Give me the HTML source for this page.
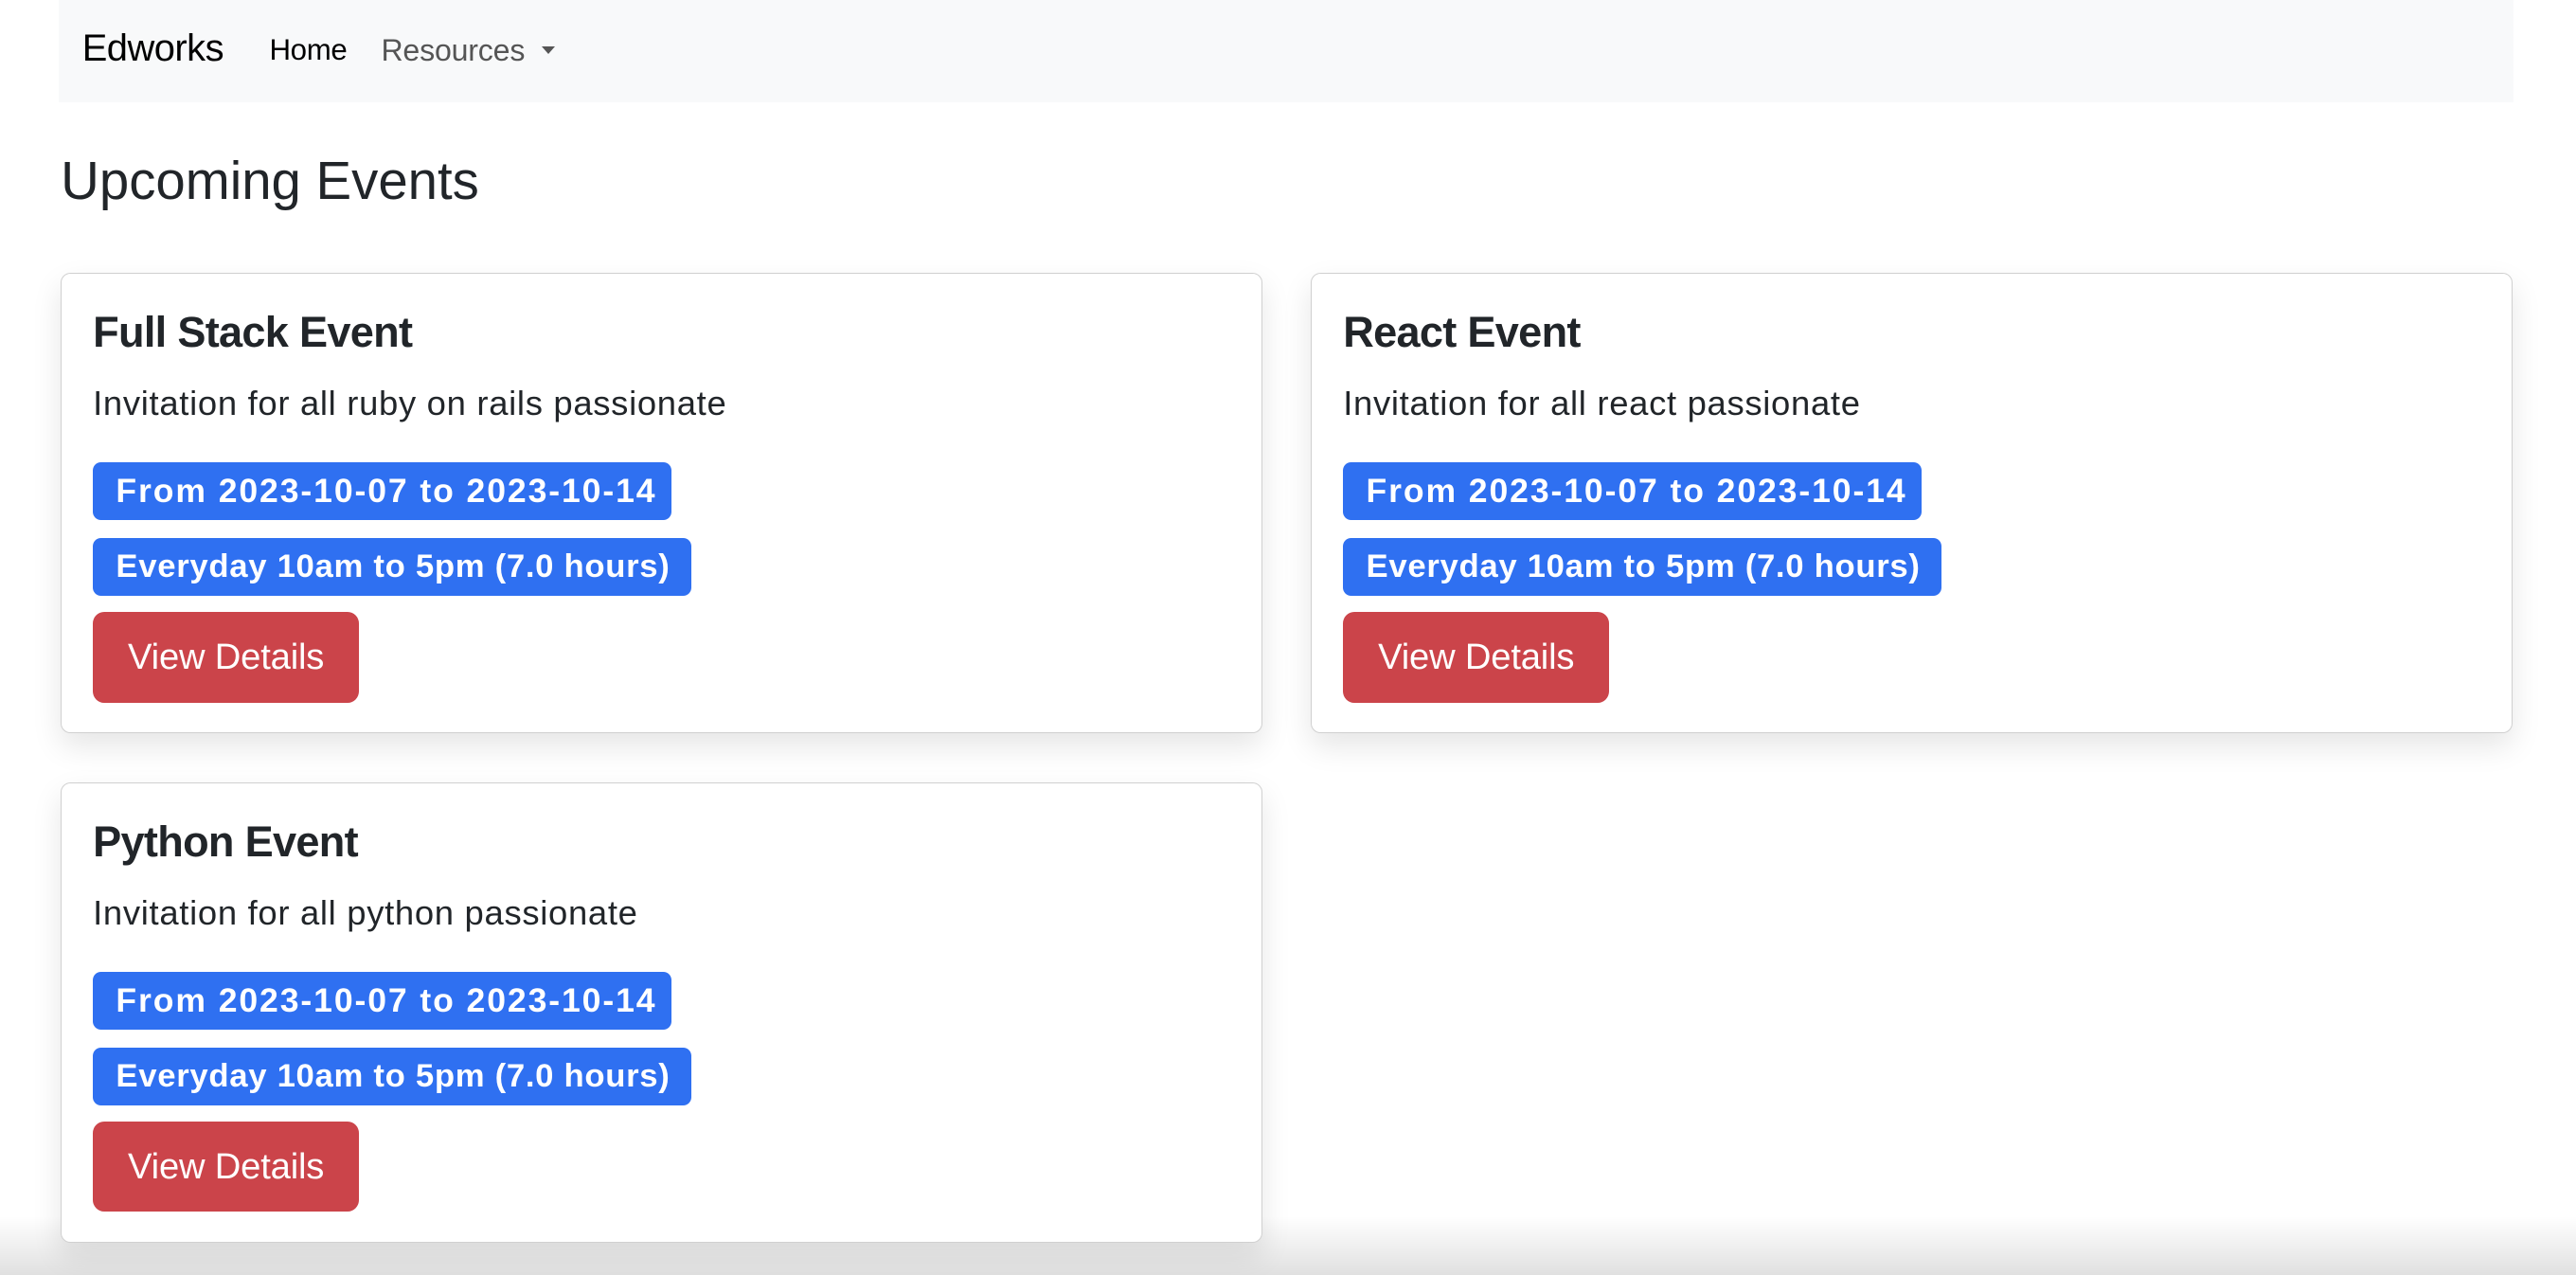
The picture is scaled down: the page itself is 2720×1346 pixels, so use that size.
<!DOCTYPE html>
<html><head><meta charset="utf-8"><style>
html,body{margin:0;padding:0;background:#fff;width:2720px;height:1346px;overflow:hidden}
#z{zoom:1.7347;width:1568px;height:776px;position:relative;font-family:"Liberation Sans",sans-serif;color:#212529}
.nav{position:absolute;left:36px;top:0;width:1494px;height:62px;background:#f8f9fa}
.a{position:absolute;white-space:nowrap}
.card{position:absolute;width:730px;height:279px;border:1px solid #d0d0d0;border-radius:6px;background:#fff;box-shadow:0 8px 18px rgba(0,0,0,.10)}
.t{position:absolute;left:19px;top:21px;font-size:26px;font-weight:bold;letter-spacing:-0.4px;white-space:nowrap}
.d{position:absolute;left:19px;top:67px;font-size:21px;letter-spacing:0.4px;white-space:nowrap}
.b{position:absolute;left:19px;height:35px;line-height:35px;background:#2f70f1;color:#fff;border-radius:5px;font-size:20px;font-weight:bold;padding:0 14px;letter-spacing:0.4px;white-space:nowrap;box-sizing:border-box;overflow:hidden}
.b1{letter-spacing:1.1px;font-size:20.5px}
.btn{position:absolute;left:19px;top:206px;width:162px;height:55px;line-height:55px;background:#cb444a;color:#fff;border-radius:7px;font-size:22px;text-align:center;letter-spacing:-0.1px}
.bot{position:absolute;left:0;top:740px;width:1568px;height:36px;background:linear-gradient(rgba(0,0,0,0),rgba(0,0,0,.12))}
</style></head><body><div id="z">
<div class="nav"></div>
<div class="a" style="left:50px;top:17px;font-size:23px;color:#000;letter-spacing:-0.3px">Edworks</div>
<div class="a" style="left:164px;top:20px;font-size:18px;color:#000;letter-spacing:-0.2px">Home</div>
<div class="a" style="left:232px;top:20px;font-size:18.5px;color:#555;letter-spacing:-0.1px">Resources</div>
<div class="a" style="left:330px;top:28px;width:0;height:0;border-left:4.5px solid transparent;border-right:4.5px solid transparent;border-top:5px solid #555"></div>
<div class="a" style="left:37px;top:91px;font-size:32.5px;letter-spacing:0px">Upcoming Events</div>
<div class="bot"></div>

<div class="card" style="left:37px;top:166px">
<div class="t">Full Stack Event</div>
<div class="d">Invitation for all ruby on rails passionate</div>
<div class="b b1" style="top:115px;width:352px">From 2023-10-07 to 2023-10-14</div>
<div class="b" style="top:161px;width:364px">Everyday 10am to 5pm (7.0 hours)</div>
<div class="btn">View Details</div>
</div>

<div class="card" style="left:798px;top:166px">
<div class="t">React Event</div>
<div class="d">Invitation for all react passionate</div>
<div class="b b1" style="top:115px;width:352px">From 2023-10-07 to 2023-10-14</div>
<div class="b" style="top:161px;width:364px">Everyday 10am to 5pm (7.0 hours)</div>
<div class="btn">View Details</div>
</div>

<div class="card" style="left:37px;top:476px">
<div class="t">Python Event</div>
<div class="d">Invitation for all python passionate</div>
<div class="b b1" style="top:115px;width:352px">From 2023-10-07 to 2023-10-14</div>
<div class="b" style="top:161px;width:364px">Everyday 10am to 5pm (7.0 hours)</div>
<div class="btn">View Details</div>
</div>
</div></body></html>
